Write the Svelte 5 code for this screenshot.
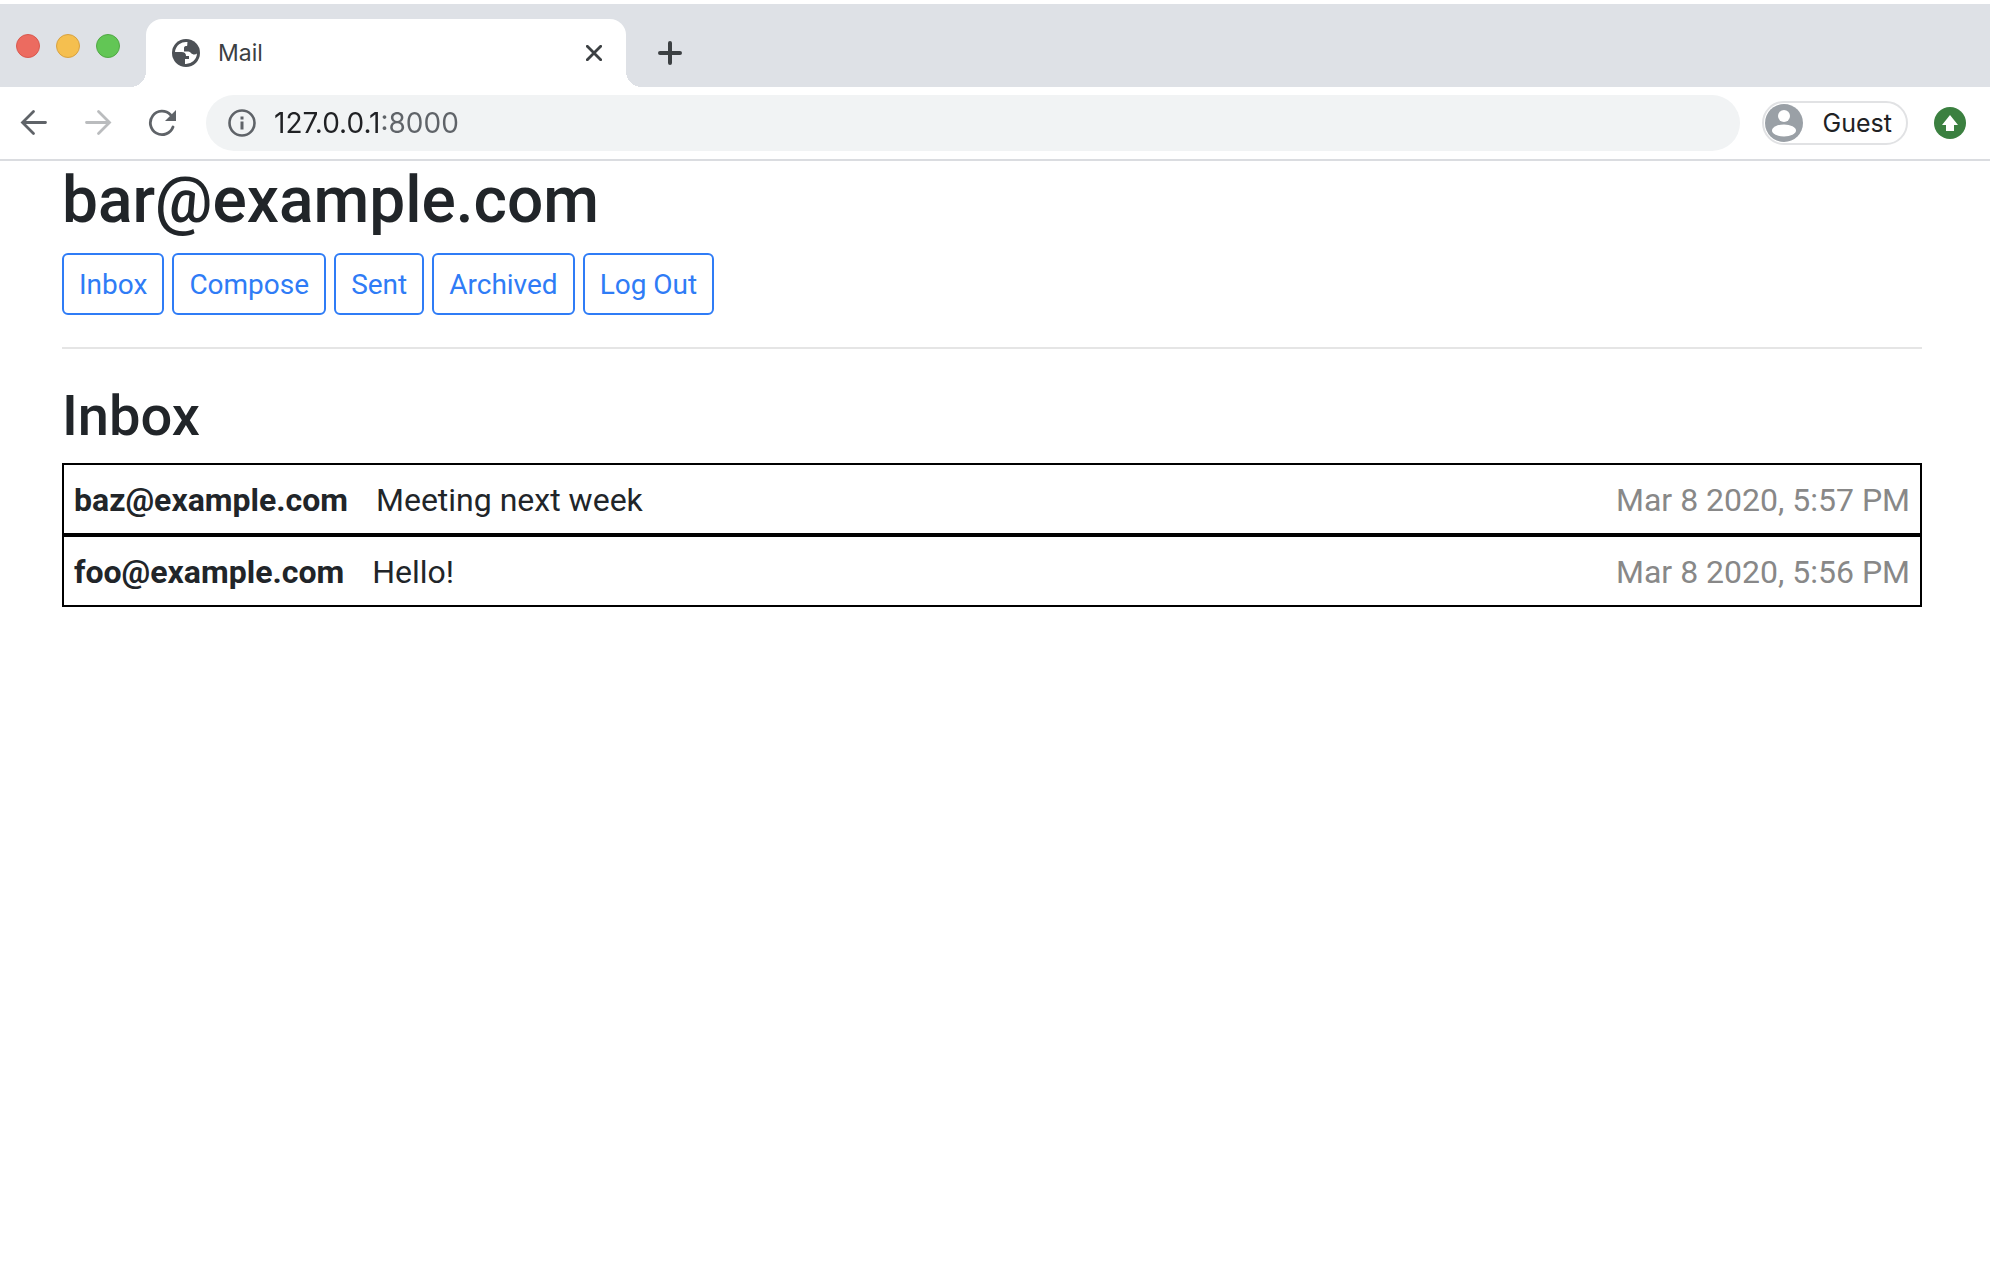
<script>
  const folders = ['Inbox', 'Compose', 'Sent', 'Archived', 'Log Out'];
  const emails = [
    { sender: 'baz@example.com', subject: 'Meeting next week', time: 'Mar 8 2020, 5:57 PM' },
    { sender: 'foo@example.com', subject: 'Hello!', time: 'Mar 8 2020, 5:56 PM' }
  ];
  let address = $state('127.0.0.1:8000');
</script>

<div class="browser">
  <div class="tabstrip">
    <div class="lights">
      <button class="light red" aria-label="Close window"></button>
      <button class="light yellow" aria-label="Minimise window"></button>
      <button class="light green" aria-label="Zoom window"></button>
    </div>
    <div class="tab">
      <svg class="globe" viewBox="0 0 28 28" aria-hidden="true">
        <circle cx="14" cy="14" r="14" fill="#4d5156" />
        <path d="M15.500 3 A11.200 11.200 0 0 0 3 13 H9.500 C12.500 13 14 14.200 14 17 H17 V20 H13 V24.900 A11.200 11.200 0 0 0 25 14.500 C23.500 16 20.500 15.800 19 14 C18 12.600 16.500 12.500 15.500 12.500 H12 V9 C12 7.500 13 7 15 7 C15.500 6 15.200 4.500 15.500 3Z" fill="#fff" />
      </svg>
      <span class="tabtitle">Mail</span>
      <button class="icon" aria-label="Close tab">
        <svg width="16" height="16" viewBox="0 0 16 16"><path d="M1.300 1.300 14.700 14.700M14.700 1.300 1.300 14.700" stroke="#3c4043" stroke-width="2.800" stroke-linecap="round" /></svg>
      </button>
    </div>
    <button class="icon newtab" aria-label="New tab">
      <svg width="24" height="24" viewBox="0 0 24 24"><path d="M12 2V22M2 12H22" stroke="#3c4043" stroke-width="4" stroke-linecap="round" /></svg>
    </button>
  </div>

  <div class="toolbar">
    <div class="nav">
      <button class="icon" aria-label="Back">
        <svg width="28" height="28" viewBox="0 0 28 28"><path d="M25.500 13.500H3M13.500 2.500 2.500 13.500 13.500 24.500" fill="none" stroke="#5f6368" stroke-width="2.800" stroke-linecap="round" /></svg>
      </button>
      <button class="icon" aria-label="Forward">
        <svg width="28" height="28" viewBox="0 0 28 28"><path d="M2.500 13.500H25M14.500 2.500 25.500 13.500 14.500 24.500" fill="none" stroke="#babcbe" stroke-width="2.800" stroke-linecap="round" /></svg>
      </button>
      <button class="icon" aria-label="Reload">
        <svg width="28" height="28" viewBox="0 0 28 28"><path d="M25 18A11.700 11.700 0 1 1 22.500 5.800" fill="none" stroke="#5f6368" stroke-width="2.800" stroke-linecap="round" /><path d="M28 1V12H17Z" fill="#5f6368" /></svg>
      </button>
    </div>
    <label class="omnibox">
      <svg width="28" height="28" viewBox="0 0 28 28" aria-hidden="true"><circle cx="14" cy="14" r="12.500" fill="none" stroke="#5f6368" stroke-width="2.600" /><path d="M12.500 7.500h3v3h-3zM12.500 12.500h3v8h-3z" fill="#5f6368" /></svg>
      <input class="address" type="text" aria-label="Address" bind:value={address} />
    </label>
    <button class="profile">
      <svg width="38" height="38" viewBox="0 0 38 38" aria-hidden="true"><circle cx="19" cy="19" r="19" fill="#9aa0a6" /><circle cx="19" cy="12" r="6" fill="#fff" /><ellipse cx="19" cy="26.500" rx="12" ry="6" fill="#fff" /></svg>
      <span>Guest</span>
    </button>
    <button class="icon" aria-label="Update browser">
      <svg width="32" height="32" viewBox="0 0 32 32"><circle cx="16" cy="16" r="16" fill="#3b8040" /><path d="M16 8 24 18H20V24H12V18H8Z" fill="#fff" /></svg>
    </button>
  </div>

  <main>
    <h2>bar@example.com</h2>
    <nav class="folders" aria-label="Mailboxes">
      {#each folders as folder}
        <button class="folder">{folder}</button>
      {/each}
    </nav>
    <hr />
    <h3>Inbox</h3>
    <ul>
      {#each emails as email}
        <li>
          <strong>{email.sender}</strong>
          <span class="subject">{email.subject}</span>
          <time>{email.time}</time>
        </li>
      {/each}
    </ul>
  </main>
</div>

<style>
  :global(body) {
    margin: 0;
    background: #fff;
  }
  .browser {
    font-family: Inter, "Liberation Sans", sans-serif;
    color: #212529;
  }
  button {
    font: inherit;
    margin: 0;
    padding: 0;
    border: 0;
    background: none;
    cursor: pointer;
  }
  .icon {
    display: grid;
    place-items: center;
    flex: none;
  }
  svg {
    display: block;
    flex: none;
  }
  .tabstrip {
    display: flex;
    align-items: flex-end;
    height: 83px;
    margin-top: 4px;
    background: #dee1e6;
  }
  .lights {
    display: flex;
    gap: 16px;
    padding: 0 26px 29px 16px;
  }
  .light {
    width: 24px;
    height: 24px;
    border-radius: 50%;
    border: 1px solid;
  }
  .red {
    background: #ec6b60;
    border-color: #d9594f;
  }
  .yellow {
    background: #f5bf4f;
    border-color: #d8a242;
  }
  .green {
    background: #62c655;
    border-color: #51a845;
  }
  .tab {
    position: relative;
    display: flex;
    align-items: center;
    box-sizing: border-box;
    width: 480px;
    height: 68px;
    padding: 0 24px 0 26px;
    border-radius: 16px 16px 0 0;
    background: #fff;
  }
  .tab::before,
  .tab::after {
    content: "";
    position: absolute;
    bottom: 0;
    width: 16px;
    height: 16px;
  }
  .tab::before {
    right: 100%;
    background: radial-gradient(circle at 0 0, transparent 16px, #fff 16px);
  }
  .tab::after {
    left: 100%;
    background: radial-gradient(circle at 100% 0, transparent 16px, #fff 16px);
  }
  .globe {
    width: 28px;
    height: 28px;
  }
  .tabtitle {
    flex: 1;
    margin-left: 18px;
    font-size: 23px;
    color: #3c4043;
  }
  .newtab {
    height: 68px;
    padding-left: 32px;
  }
  .toolbar {
    display: flex;
    align-items: center;
    height: 72px;
    padding: 0 24px 0 20px;
    border-bottom: 2px solid #dadce0;
  }
  .nav {
    display: flex;
    gap: 36px;
    margin-right: 30px;
  }
  .omnibox {
    display: flex;
    flex: 1;
    align-items: center;
    height: 56px;
    padding: 0 22px;
    border-radius: 28px;
    background: #f1f3f4;
  }
  .address {
    flex: 1;
    min-width: 0;
    margin-left: 18px;
    padding: 0;
    border: 0;
    outline: 0;
    font: inherit;
    font-size: 28px;
    color: transparent;
    caret-color: #202124;
    /* host in dark, port in grey */
    background: linear-gradient(90deg, #202124 109px, #5f6368 109px);
    background-clip: text;
  }
  .profile {
    display: flex;
    align-items: center;
    gap: 20px;
    height: 44px;
    box-sizing: border-box;
    margin: 0 26px 0 22px;
    padding: 0 14px 0 1px;
    border: 2px solid #e1e2e4;
    border-radius: 22px;
    font-size: 25px;
    color: #202124;
  }
  main {
    padding: 0 68px 0 62px;
    font-family: Roboto, "Liberation Sans", sans-serif;
  }
  h2,
  h3 {
    margin: 0 0 12px;
    font-weight: 500;
  }
  h2 {
    font-size: 64px;
    line-height: 80px;
  }
  h3 {
    font-size: 56px;
    line-height: 70px;
  }
  .folders {
    display: flex;
    flex-wrap: wrap;
    gap: 8px;
  }
  .folder {
    padding: 9px 15px 7px;
    border: 2px solid #2f7cf6;
    border-radius: 6px;
    font-size: 28px;
    line-height: 42px;
    color: #2f7cf6;
  }
  hr {
    height: 2px;
    margin: 32px 0;
    border: 0;
    background: #e5e5e5;
  }
  ul {
    margin: 0;
    padding: 0;
    list-style: none;
  }
  li {
    display: flex;
    padding: 11px 10px 9px;
    border: 2px solid #000;
    font-size: 32px;
    line-height: 48px;
    white-space: nowrap;
  }
  .subject {
    margin-left: 28px;
  }
  time {
    margin-left: auto;
    color: #888;
  }
</style>
